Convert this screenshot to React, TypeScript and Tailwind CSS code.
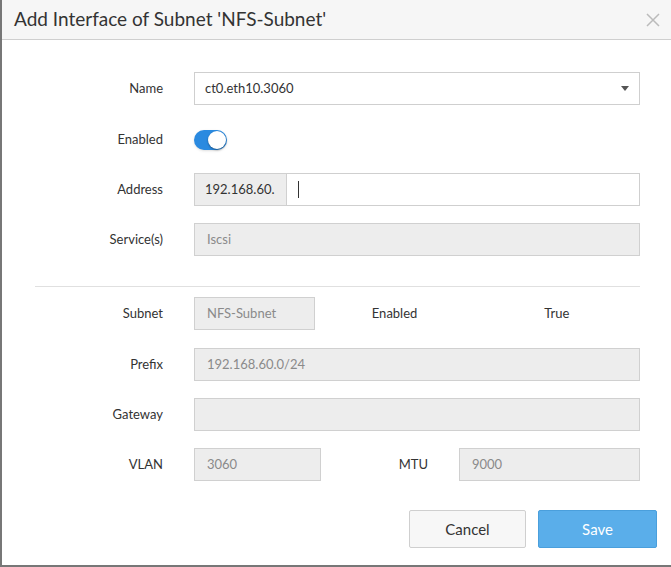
import React from "react";

const F = { fontFamily: 'Lato,"Open Sans","Liberation Sans",sans-serif' };

function Label({ children }: { children: React.ReactNode }) {
  return <div className="w-[161px] shrink-0 pr-0 text-right text-[13px] text-[#333]">{children}</div>;
}

const ro = "h-[33px] border border-[#d0d0d0] bg-[#ededed] text-[13px] text-[#8a8a8a] flex items-center px-[12px]";

export default function App() {
  return (
    <div style={F} className="w-[671px] h-[567px] bg-white border-l-2 border-b-2 border-[#777] flex flex-col">
      <div className="h-[40px] bg-[#f6f6f6] border-b border-[#cfcfcf] flex items-center justify-between pl-[12px] pr-[10px]">
        <div className="text-[19px] text-[#333]">Add Interface of Subnet 'NFS-Subnet'</div>
        <svg width="16" height="16" viewBox="0 0 16 16"><path d="M2 2L14 14M14 2L2 14" stroke="#bbb" strokeWidth="1.5" /></svg>
      </div>
      <div className="flex flex-col pr-[31px]">
        <div className="flex items-center mt-[32px] gap-[31px]">
          <Label>Name</Label>
          <div className="flex-1 h-[33px] border border-[#cfcfcf] bg-white flex items-center justify-between px-[10px] text-[13px] text-[#333]">
            <span>ct0.eth10.3060</span>
            <svg width="8" height="5" viewBox="0 0 8 5"><path d="M0 0H8L4 5Z" fill="#555" /></svg>
          </div>
        </div>
        <div className="flex items-center mt-[25px] gap-[31px]">
          <Label>Enabled</Label>
          <div className="w-[33px] h-[20px] rounded-full bg-[#2a8ae0] relative shadow">
            <div className="absolute right-[1px] top-[1px] w-[18px] h-[18px] rounded-full bg-white shadow-[0_1px_2px_rgba(0,0,0,0.4)]" />
          </div>
        </div>
        <div className="flex items-center mt-[23px] gap-[31px]">
          <Label>Address</Label>
          <div className="flex-1 flex">
            <div className="w-[93px] h-[33px] border border-[#d0d0d0] bg-[#ededed] text-[13px] text-[#333] flex items-center px-[10px]">192.168.60.</div>
            <div className="flex-1 h-[33px] border border-l-0 border-[#cfcfcf] bg-white flex items-center px-[11px]">
              <div className="w-[1px] h-[17px] bg-[#333]" />
            </div>
          </div>
        </div>
        <div className="flex items-center mt-[17px] gap-[31px]">
          <Label>Service(s)</Label>
          <div className={"flex-1 " + ro}>Iscsi</div>
        </div>
      </div>
      <div className="ml-[33px] mr-[31px] mt-[30px] border-t border-[#e0e0e0]" />
      <div className="flex flex-col pr-[31px]">
        <div className="flex items-center mt-[10px] gap-[31px]">
          <Label>Subnet</Label>
          <div className={"w-[127px] " + ro}>NFS-Subnet</div>
          <div className="w-[102px] text-center text-[13px] text-[#333]">Enabled</div>
          <div className="w-[176px] text-center text-[13px] text-[#333]">True</div>
        </div>
        <div className="flex items-center mt-[18px] gap-[31px]">
          <Label>Prefix</Label>
          <div className={"flex-1 " + ro}>192.168.60.0/24</div>
        </div>
        <div className="flex items-center mt-[17px] gap-[31px]">
          <Label>Gateway</Label>
          <div className={"flex-1 " + ro}></div>
        </div>
        <div className="flex items-center mt-[17px] gap-[31px]">
          <Label>VLAN</Label>
          <div className={"w-[127px] " + ro}>3060</div>
          <div className="w-[76px] text-right text-[13px] text-[#333]">MTU</div>
          <div className={"flex-1 " + ro}>9000</div>
        </div>
      </div>
      <div className="flex justify-end gap-[12px] mt-[29px] pr-[14px]">
        <div className="w-[117px] h-[38px] border border-[#cfcfcf] bg-[#f7f7f7] rounded-[2px] flex items-center justify-center text-[15px] text-[#333]">Cancel</div>
        <div className="w-[119px] h-[38px] bg-[#5aaeea] border border-[#4a9fdc] rounded-[2px] flex items-center justify-center text-[15px] text-white">Save</div>
      </div>
    </div>
  );
}
